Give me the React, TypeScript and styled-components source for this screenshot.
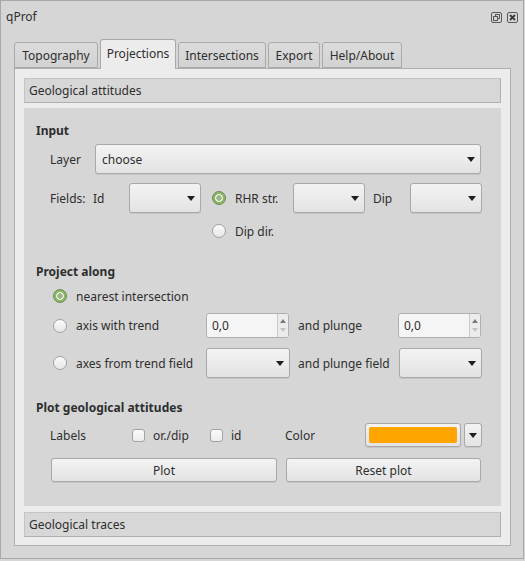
import React from 'react';
import styled, { createGlobalStyle } from 'styled-components';

const GlobalStyle = createGlobalStyle`
  html, body {
    margin: 0;
    padding: 0;
    background: #d6d6d6;
  }
  * {
    box-sizing: border-box;
  }
`;

const tabs = [
  { label: 'Topography', width: 84 },
  { label: 'Projections', width: 76 },
  { label: 'Intersections', width: 88 },
  { label: 'Export', width: 52 },
  { label: 'Help/About', width: 80 },
];

export default function App() {
  return (
    <>
      <GlobalStyle />
      <Window>
        <TitleBar>
          <Title>qProf</Title>
          <TitleButtons>
            <FloatIcon />
            <CloseIcon />
          </TitleButtons>
        </TitleBar>
        <Body>
          <TabBar>
            {tabs.map((t) => (
              <Tab key={t.label} $w={t.width} $active={t.label === 'Projections'}>
                {t.label}
              </Tab>
            ))}
          </TabBar>
          <Pane>
            <ToolboxHeader>Geological attitudes</ToolboxHeader>
            <Panel>
              <SectionTitle>Input</SectionTitle>
              <Row $h={30} $mt={4} $indent={14}>
                <Cell $w={45}>Layer</Cell>
                <ComboBox $w={386}>choose</ComboBox>
              </Row>
              <Row $h={30} $mt={9} $indent={14}>
                <Cell $w={43}>Fields:</Cell>
                <Cell $w={36}>Id</Cell>
                <ComboBox $w={72} />
                <RadioItem $w={81} $ml={11} checked>
                  RHR str.
                </RadioItem>
                <ComboBox $w={72} />
                <Cell $w={45} $pl={8}>
                  Dip
                </Cell>
                <ComboBox $w={72} />
              </Row>
              <Row $h={20} $mt={8} $indent={14}>
                <RadioItem $ml={162}>Dip dir.</RadioItem>
              </Row>

              <SectionTitle $mt={22}>Project along</SectionTitle>
              <Row $h={20} $mt={5} $indent={17}>
                <RadioItem checked>nearest intersection</RadioItem>
              </Row>
              <Row $h={25} $mt={7} $indent={17}>
                <RadioItem $w={153}>axis with trend</RadioItem>
                <SpinBox value="0,0" $w={83} />
                <Cell $w={109} $pl={9}>
                  and plunge
                </Cell>
                <SpinBox value="0,0" $w={83} />
              </Row>
              <Row $h={30} $mt={10} $indent={17}>
                <RadioItem $w={153}>axes from trend field</RadioItem>
                <ComboBox $w={84} />
                <Cell $w={109} $pl={8}>
                  and plunge field
                </Cell>
                <ComboBox $w={83} />
              </Row>

              <SectionTitle $mt={21}>Plot geological attitudes</SectionTitle>
              <Row $h={24} $mt={6} $indent={14}>
                <Cell $w={82}>Labels</Cell>
                <CheckItem $w={78}>or./dip</CheckItem>
                <CheckItem $w={75}>id</CheckItem>
                <Cell $w={80}>Color</Cell>
                <ColorButton>
                  <Swatch $color="#ffa500" />
                </ColorButton>
                <ArrowButton>
                  <Arrow />
                </ArrowButton>
              </Row>
              <Row $h={24} $mt={11} $indent={15}>
                <PushButton $w={226}>Plot</PushButton>
                <PushButton $w={195} $ml={9}>
                  Reset plot
                </PushButton>
              </Row>
            </Panel>
            <ToolboxHeader $mt={6}>Geological traces</ToolboxHeader>
          </Pane>
        </Body>
      </Window>
    </>
  );
}

function FloatIcon() {
  return (
    <svg width="11" height="11" viewBox="0 0 11 11">
      <rect x="0.5" y="0.5" width="10" height="10" rx="1.5" fill="none" stroke="#5a5a5a" />
      <rect x="4.5" y="2.5" width="4" height="4" fill="none" stroke="#5a5a5a" />
      <rect x="2.5" y="4.5" width="4" height="4" fill="#d6d6d6" stroke="#5a5a5a" />
    </svg>
  );
}

function CloseIcon() {
  return (
    <svg width="11" height="11" viewBox="0 0 11 11">
      <rect x="0.5" y="0.5" width="10" height="10" rx="1.5" fill="none" stroke="#5a5a5a" />
      <path d="M3 3 L8 8 M8 3 L3 8" stroke="#3a3a3a" strokeWidth="1.8" />
    </svg>
  );
}

function ComboBox({ $w, children }: { $w: number; children?: React.ReactNode }) {
  return (
    <Combo $w={$w}>
      <ComboText>{children}</ComboText>
      <Arrow />
    </Combo>
  );
}

function SpinBox({ value, $w }: { value: string; $w: number }) {
  return (
    <Spin $w={$w}>
      <SpinText>{value}</SpinText>
      <SpinArrows>
        <SpinArrow $up />
        <SpinArrow />
      </SpinArrows>
    </Spin>
  );
}

function RadioItem({
  checked,
  $w,
  $ml,
  children,
}: {
  checked?: boolean;
  $w?: number;
  $ml?: number;
  children: React.ReactNode;
}) {
  return (
    <Choice $w={$w} $ml={$ml}>
      <Radio $checked={!!checked} />
      <span>{children}</span>
    </Choice>
  );
}

function CheckItem({ $w, children }: { $w: number; children: React.ReactNode }) {
  return (
    <Choice $w={$w} $gap={8}>
      <Check />
      <span>{children}</span>
    </Choice>
  );
}

const Window = styled.div`
  width: 524px;
  height: 559px;
  border: 1px solid #a9a9a9;
  background: #d6d6d6;
  display: flex;
  flex-direction: column;
  font-family: 'Noto Sans', 'Open Sans', sans-serif;
  font-size: 12px;
  color: #2e2e2e;
`;

const TitleBar = styled.div`
  height: 38px;
  display: flex;
  justify-content: space-between;
  align-items: flex-start;
  padding: 7px 5px 0 5px;
`;

const Title = styled.div`
  line-height: 17px;
`;

const TitleButtons = styled.div`
  display: flex;
  gap: 5px;
  margin-top: 4px;
`;

const Body = styled.div`
  padding: 0 12px 0 13px;
`;

const TabBar = styled.div`
  display: flex;
  align-items: flex-end;
  gap: 2px;
  height: 29px;
  position: relative;
  z-index: 1;
`;

const Tab = styled.div<{ $active: boolean; $w: number }>`
  width: ${(p) => p.$w}px;
  height: ${(p) => (p.$active ? 30 : 26)}px;
  margin-bottom: ${(p) => (p.$active ? -1 : 0)}px;
  padding-bottom: ${(p) => (p.$active ? 2 : 0)}px;
  display: flex;
  align-items: center;
  justify-content: center;
  white-space: nowrap;
  border: 1px solid #a9a9a9;
  border-bottom: ${(p) => (p.$active ? 'none' : '1px solid #a9a9a9')};
  border-radius: 3px 3px 0 0;
  background: ${(p) => (p.$active ? '#ececec' : 'linear-gradient(#dcdcdc, #d2d2d2)')};
`;

const Pane = styled.div`
  border: 1px solid #aeaeae;
  background: #ececec;
  padding: 9px 9px 8px 9px;
  display: flex;
  flex-direction: column;
`;

const ToolboxHeader = styled.div<{ $mt?: number }>`
  height: 25px;
  margin-top: ${(p) => p.$mt ?? 0}px;
  display: flex;
  align-items: center;
  padding: 0 4px;
  background: #d7d7d7;
  border: 1px solid #b8b8b8;
  border-color: #c4c4c4 #b0b0b0 #b0b0b0 #c4c4c4;
`;

const Panel = styled.div`
  margin-top: 5px;
  height: 398px;
  background: #d6d6d6;
  padding: 14px 18px 0 12px;
  display: flex;
  flex-direction: column;
`;

const SectionTitle = styled.div<{ $mt?: number }>`
  height: 18px;
  line-height: 18px;
  margin-top: ${(p) => p.$mt ?? 0}px;
  font-weight: bold;
`;

const Row = styled.div<{ $h: number; $mt: number; $indent: number }>`
  display: flex;
  align-items: center;
  height: ${(p) => p.$h}px;
  margin-top: ${(p) => p.$mt}px;
  padding-left: ${(p) => p.$indent}px;
`;

const Cell = styled.div<{ $w: number; $pl?: number }>`
  width: ${(p) => p.$w}px;
  padding-left: ${(p) => p.$pl ?? 0}px;
  flex-shrink: 0;
  white-space: nowrap;
`;

const raised = `
  border: 1px solid #a8a8a8;
  border-radius: 3px;
  background: linear-gradient(#f3f3f3, #e3e3e3);
  box-shadow: 0 1px 0 rgba(0, 0, 0, 0.08);
`;

const Combo = styled.div<{ $w: number }>`
  ${raised}
  width: ${(p) => p.$w}px;
  height: 100%;
  flex-shrink: 0;
  display: flex;
  align-items: center;
  padding: 0 5px 0 6px;
`;

const ComboText = styled.span`
  flex: 1;
`;

const Arrow = styled.span`
  width: 0;
  height: 0;
  border-left: 4px solid transparent;
  border-right: 4px solid transparent;
  border-top: 5px solid #1e1e1e;
`;

const Spin = styled.div<{ $w: number }>`
  width: ${(p) => p.$w}px;
  height: 100%;
  flex-shrink: 0;
  display: flex;
  border: 1px solid #b0b0b0;
  border-radius: 3px;
  background: #f5f5f5;
`;

const SpinText = styled.span`
  flex: 1;
  display: flex;
  align-items: center;
  padding-left: 5px;
`;

const SpinArrows = styled.div`
  width: 11px;
  border-left: 1px solid #c8c8c8;
  background: #ececec;
  border-radius: 0 2px 2px 0;
  display: flex;
  flex-direction: column;
  justify-content: space-around;
  align-items: center;
  padding: 3px 0;
`;

const SpinArrow = styled.span<{ $up?: boolean }>`
  width: 0;
  height: 0;
  border-left: 3px solid transparent;
  border-right: 3px solid transparent;
  ${(p) =>
    p.$up ? 'border-bottom: 4px solid #7a7a7a;' : 'border-top: 4px solid #c2c2c2;'}
`;

const Choice = styled.div<{ $w?: number; $ml?: number; $gap?: number }>`
  display: flex;
  align-items: center;
  gap: ${(p) => p.$gap ?? 9}px;
  width: ${(p) => (p.$w ? `${p.$w}px` : 'auto')};
  margin-left: ${(p) => p.$ml ?? 0}px;
  flex-shrink: 0;
  white-space: nowrap;
`;

const Radio = styled.span<{ $checked: boolean }>`
  width: 14px;
  height: 14px;
  border-radius: 50%;
  flex-shrink: 0;
  border: 1px solid ${(p) => (p.$checked ? '#6b8a52' : '#a2a2a2')};
  background: ${(p) =>
    p.$checked
      ? 'radial-gradient(circle, #9bb585 0 2.5px, #eef4e8 3px 3.6px, #8cb866 4.2px)'
      : 'linear-gradient(#fbfbfb, #e6e6e6)'};
`;

const Check = styled.span`
  width: 13px;
  height: 13px;
  border-radius: 3px;
  flex-shrink: 0;
  border: 1px solid #a2a2a2;
  background: linear-gradient(#fbfbfb, #ececec);
`;

const ColorButton = styled.div`
  ${raised}
  width: 96px;
  height: 100%;
  padding: 3px;
  flex-shrink: 0;
`;

const Swatch = styled.div<{ $color: string }>`
  width: 100%;
  height: 100%;
  border-radius: 2px;
  background: ${(p) => p.$color};
`;

const ArrowButton = styled.div`
  ${raised}
  width: 18px;
  height: 100%;
  margin-left: 3px;
  display: flex;
  align-items: center;
  justify-content: center;
  flex-shrink: 0;
`;

const PushButton = styled.div<{ $w: number; $ml?: number }>`
  ${raised}
  width: ${(p) => p.$w}px;
  height: 100%;
  margin-left: ${(p) => p.$ml ?? 0}px;
  display: flex;
  align-items: center;
  justify-content: center;
  flex-shrink: 0;
`;
